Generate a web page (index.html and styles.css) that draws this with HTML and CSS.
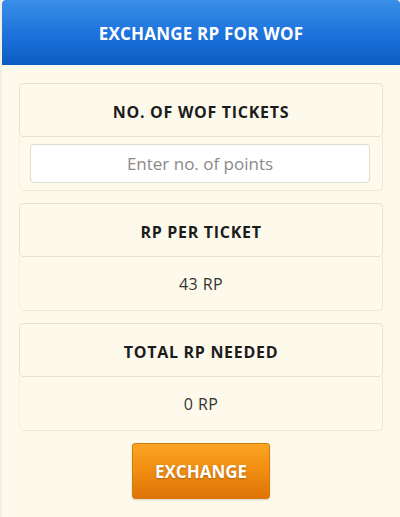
FILE: index.html
```html
<!DOCTYPE html>
<html lang="en">

<head>
    <meta charset="UTF-8">
    <meta name="viewport" content="width=device-width, initial-scale=1.0">
    <title>Exchange RP for WOF</title>
    <link rel="stylesheet" href="styles.css">
</head>

<body>
    <div class="panel">
        <div class="panel-title">EXCHANGE RP FOR WOF</div>

        <div class="panel-body">
            <div class="field">
                <div class="field-label">NO. OF WOF TICKETS</div>
                <div class="field-value field-input">
                    <input type="text" class="points-input" placeholder="Enter no. of points">
                </div>
            </div>

            <div class="field">
                <div class="field-label">RP PER TICKET</div>
                <div class="field-value">43 RP</div>
            </div>

            <div class="field">
                <div class="field-label">TOTAL RP NEEDED</div>
                <div class="field-value">0 RP</div>
            </div>

            <button class="btn exchange-btn">EXCHANGE</button>
        </div>
    </div>
</body>

</html>
```

FILE: styles.css
```css
* {
    margin: 0;
    padding: 0;
    box-sizing: border-box;
    font-family: 'Open Sans', 'Noto Sans', sans-serif;
}

body {
    background: #fdfaec;
    width: 400px;
    height: 517px;
    overflow: hidden;
}

.panel {
    height: 517px;
    background: #fdfaec;
    border-left: 2px solid #f3f1e6;
}

.panel-title {
    height: 65px;
    display: flex;
    align-items: center;
    justify-content: center;
    padding-top: 2px;
    background: linear-gradient(to bottom, #3b8fe9 0%, #1f74dc 50%, #0b5cc1 100%);
    border-top-left-radius: 4px;
    border-top-right-radius: 4px;
    color: #fff;
    font-size: 17px;
    font-weight: 700;
    letter-spacing: 0.2px;
}

.panel-body {
    display: flex;
    flex-direction: column;
    gap: 12px;
    padding: 18px 17px 0 17px;
}

.field {
    display: flex;
    flex-direction: column;
}

.field-label {
    height: 54px;
    display: flex;
    align-items: center;
    justify-content: center;
    padding-top: 3px;
    border: 1px solid #e7e3d3;
    border-radius: 4px;
    color: #1c1c1c;
    font-size: 16px;
    font-weight: 700;
    letter-spacing: 0.7px;
}

.field-value {
    height: 54px;
    display: flex;
    align-items: center;
    justify-content: center;
    padding-top: 1px;
    border: 1px solid #ece8da;
    border-top: none;
    border-left-color: #f4f1e4;
    border-radius: 0 0 5px 5px;
    color: #333;
    font-size: 16px;
    letter-spacing: 0.4px;
}

.field-input {
    padding: 6px 12px 7px 10px;
}

.points-input {
    width: 100%;
    height: 39px;
    border: 1px solid #dedbd0;
    border-radius: 4px;
    background: #fff;
    text-align: center;
    font-size: 17px;
    color: #333;
    outline: none;
}

.points-input::placeholder {
    color: #8a8a8a;
}

.btn {
    align-self: center;
    width: 138px;
    height: 56px;
    border: 1px solid #d77a0a;
    border-radius: 3px;
    cursor: pointer;
    font-size: 17px;
    font-weight: 700;
    color: #fff;
}

.exchange-btn {
    background: linear-gradient(to bottom, #fca423 0%, #f08d12 50%, #de7406 100%);
    text-shadow: 0 1px 2px rgba(120, 60, 0, 0.5);
    box-shadow: 0 1px 2px rgba(0, 0, 0, 0.15);
}
```
